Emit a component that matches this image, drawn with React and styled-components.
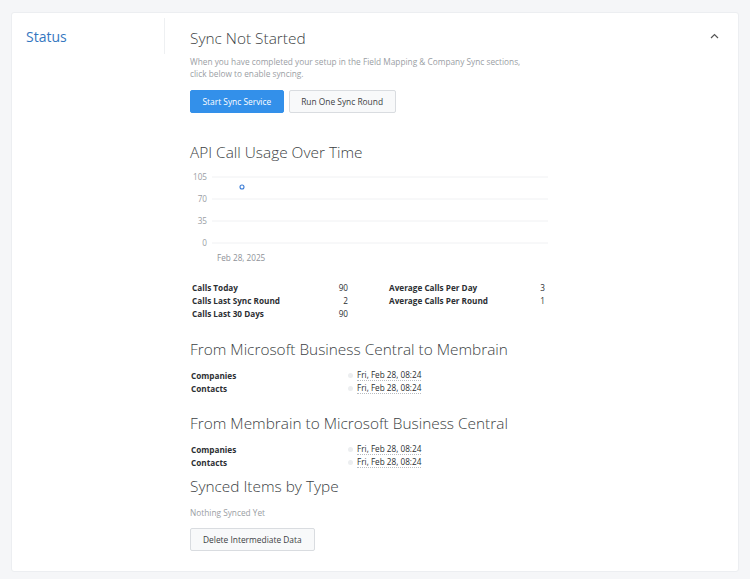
import styled, { createGlobalStyle } from "styled-components";

const GlobalStyle = createGlobalStyle`
  html, body {
    margin: 0;
    padding: 0;
    background: #f5f6f8;
    font-family: "Open Sans", "Liberation Sans", sans-serif;
  }
`;

const Page = styled.div`
  padding: 12px 11px 7px;
`;

const Card = styled.div`
  background: #fff;
  border: 1px solid #eceef1;
  border-radius: 3px;
  height: 558px;
  display: grid;
  grid-template-columns: 153px 1fr;
  position: relative;
`;

const Side = styled.div`
  margin-top: 5px;
  height: 36px;
  border-right: 1px solid #eef0f2;
  padding: 10px 0 0 14px;
  box-sizing: border-box;
`;

const SideTitle = styled.div`
  color: #3577bf;
  font-size: 14px;
  line-height: 18px;
`;

const Main = styled.div`
  padding: 15px 0 0 25px;
  display: flex;
  flex-direction: column;
  align-items: flex-start;
`;

const Collapse = styled.button`
  position: absolute;
  top: 20px;
  right: 19px;
  border: 0;
  background: none;
  padding: 0;
  display: flex;
`;

const Heading = styled.h2`
  margin: ${(p) => p.$mt || 0}px 0 0;
  font-size: 15.4px;
  font-weight: 300;
  line-height: 22px;
  color: #3c3f44;
`;

const Note = styled.p`
  margin: ${(p) => p.$mt || 0}px 0 0;
  font-size: 8.3px;
  line-height: 12px;
  color: #9a9ea4;
`;

const ButtonRow = styled.div`
  display: flex;
  gap: 5px;
  margin-top: 10px;
`;

const Button = styled.button`
  height: 23px;
  padding: 0 ${(p) => p.$px || 11.5}px;
  font-family: inherit;
  font-size: 8.4px;
  border-radius: 2px;
  cursor: pointer;
  margin-top: ${(p) => p.$mt || 0}px;
  color: ${(p) => (p.$primary ? "#fff" : "#3c3f44")};
  background: ${(p) => (p.$primary ? "#3390ea" : "#f8f9fa")};
  border: 1px solid ${(p) => (p.$primary ? "#3390ea" : "#d9dce0")};
`;

const Chart = styled.svg`
  display: block;
  margin-top: 6px;
`;

const Stats = styled.div`
  display: grid;
  grid-template-columns: 156px 156px;
  column-gap: 41px;
  margin: 16px 0 0 2px;
`;

const StatRow = styled.div`
  display: flex;
  justify-content: space-between;
  font-size: 8.2px;
  line-height: 13px;
  color: #2c2f33;
  grid-column: ${(p) => p.$col};
`;

const StatLabel = styled.span`
  font-weight: 700;
`;

const SyncTable = styled.div`
  display: grid;
  grid-template-columns: 157px auto;
  margin: ${(p) => p.$mt || 8}px 0 0 1px;
  font-size: 8.2px;
  line-height: 13px;
  color: #2c2f33;
`;

const SyncLabel = styled.span`
  font-weight: 700;
`;

const SyncValue = styled.span`
  display: flex;
  align-items: center;
  gap: 4px;
`;

const Dot = styled.span`
  width: 5px;
  height: 5px;
  border-radius: 50%;
  background: #eceef0;
`;

const DateText = styled.span`
  line-height: 10px;
  border-bottom: 1px dotted #b9bdc2;
`;

const ChevronUp = () => (
  <svg width="9" height="6" viewBox="0 0 9 6" fill="none">
    <path d="M1 5 L4.5 1.5 L8 5" stroke="#555" strokeWidth="1.2" />
  </svg>
);

const ticks = [
  { v: "105", y: 7 },
  { v: "70", y: 29 },
  { v: "35", y: 51 },
  { v: "0", y: 73 },
];

const UsageChart = () => (
  <Chart width="360" height="95" viewBox="0 0 360 95">
    {ticks.map((t) => (
      <g key={t.v}>
        <line x1="22" x2="358" y1={t.y} y2={t.y} stroke="#f0f1f3" strokeWidth="1" />
        <text
          x="17"
          y={t.y + 3}
          textAnchor="end"
          fontSize="8.2"
          fill="#9a9ea4"
          fontFamily="Open Sans, sans-serif"
        >
          {t.v}
        </text>
      </g>
    ))}
    <circle cx="52" cy="17" r="2" fill="#fff" stroke="#3a7bd5" strokeWidth="1.1" />
    <text x="27" y="91" fontSize="8.2" fill="#8e9298" fontFamily="Open Sans, sans-serif">
      Feb 28, 2025
    </text>
  </Chart>
);

const SyncRows = ({ mt }) => (
  <SyncTable $mt={mt}>
    {["Companies", "Contacts"].flatMap((name) => [
      <SyncLabel key={name + "l"}>{name}</SyncLabel>,
      <SyncValue key={name + "v"}>
        <Dot />
        <DateText>Fri, Feb 28, 08:24</DateText>
      </SyncValue>,
    ])}
  </SyncTable>
);

export default function App() {
  return (
    <>
      <GlobalStyle />
      <Page>
        <Card>
          <Side>
            <SideTitle>Status</SideTitle>
          </Side>
          <Main>
            <Heading>Sync Not Started</Heading>
            <Note $mt={6}>
              When you have completed your setup in the Field Mapping &amp; Company Sync sections,
              <br />
              click below to enable syncing.
            </Note>
            <ButtonRow>
              <Button $primary>Start Sync Service</Button>
              <Button>Run One Sync Round</Button>
            </ButtonRow>

            <Heading $mt={29}>API Call Usage Over Time</Heading>
            <UsageChart />

            <Stats>
              <StatRow $col={1}>
                <StatLabel>Calls Today</StatLabel>
                <span>90</span>
              </StatRow>
              <StatRow $col={2}>
                <StatLabel>Average Calls Per Day</StatLabel>
                <span>3</span>
              </StatRow>
              <StatRow $col={1}>
                <StatLabel>Calls Last Sync Round</StatLabel>
                <span>2</span>
              </StatRow>
              <StatRow $col={2}>
                <StatLabel>Average Calls Per Round</StatLabel>
                <span>1</span>
              </StatRow>
              <StatRow $col={1}>
                <StatLabel>Calls Last 30 Days</StatLabel>
                <span>90</span>
              </StatRow>
            </Stats>

            <Heading $mt={19}>From Microsoft Business Central to Membrain</Heading>
            <SyncRows mt={8} />

            <Heading $mt={18}>From Membrain to Microsoft Business Central</Heading>
            <SyncRows mt={8} />

            <Heading $mt={7}>Synced Items by Type</Heading>
            <Note $mt={9}>Nothing Synced Yet</Note>
            <Button $mt={9} $px={12}>Delete Intermediate Data</Button>
          </Main>
          <Collapse aria-label="Collapse">
            <ChevronUp />
          </Collapse>
        </Card>
      </Page>
    </>
  );
}
